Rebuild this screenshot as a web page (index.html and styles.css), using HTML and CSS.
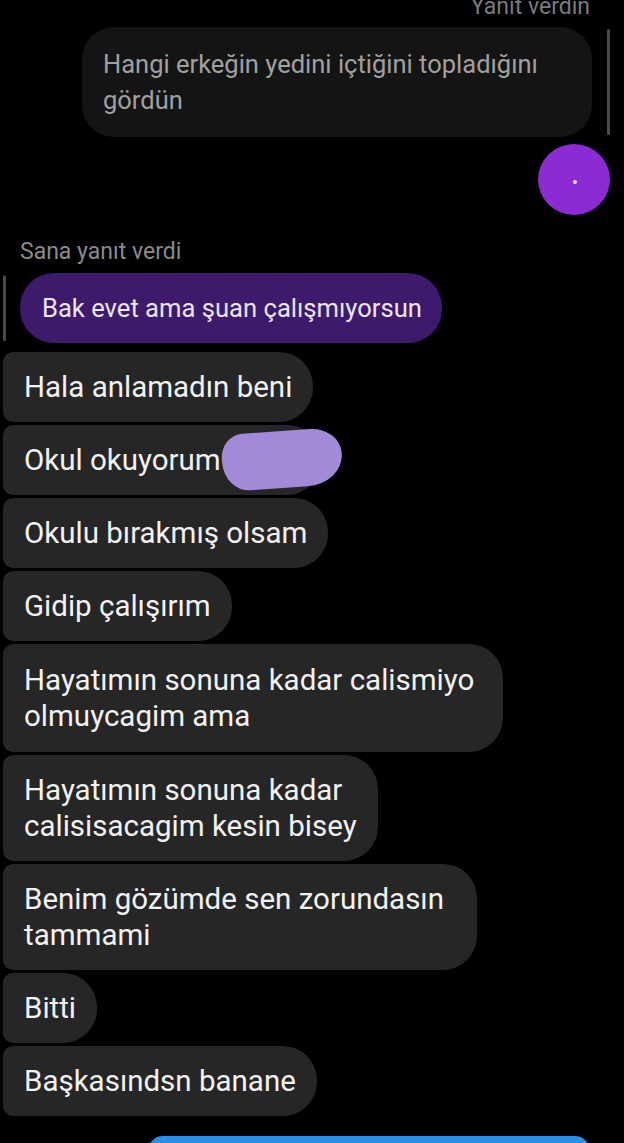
FILE: index.html
```html
<!DOCTYPE html>
<html lang="tr">
<head>
  <meta charset="UTF-8" />
  <meta name="viewport" content="width=device-width, initial-scale=1.0"/>
  <title>Mesajlar</title>
  <link rel="stylesheet" href="styles.css">
</head>
<body>
  <div class="chat">
    <div class="reply-label mine">Yanıt verdin</div>
    <div class="quote-row mine">
      <div class="quote-bubble">Hangi erkeğin yedini içtiğini topladığını gördün</div>
      <div class="quote-bar"></div>
    </div>
    <div class="sent-row">
      <div class="dot-bubble"><span class="dot"></span></div>
    </div>

    <div class="reply-label theirs">Sana yanıt verdi</div>
    <div class="quote-row theirs">
      <div class="quote-bar"></div>
      <div class="purple-bubble">Bak evet ama şuan çalışmıyorsun</div>
    </div>

    <div class="msgs">
      <div class="msg">Hala anlamadın beni</div>
      <div class="msg hidden-part">Okul okuyorum<span class="scribble"></span></div>
      <div class="msg">Okulu bırakmış olsam</div>
      <div class="msg">Gidip çalışırım</div>
      <div class="msg wide">Hayatımın sonuna kadar calismiyo<br>olmuycagim ama</div>
      <div class="msg">Hayatımın sonuna kadar<br>calisisacagim kesin bisey</div>
      <div class="msg wider">Benim gözümde sen zorundasın<br>tammami</div>
      <div class="msg">Bitti</div>
      <div class="msg">Başkasındsn banane</div>
    </div>

    <div class="input-peek"></div>
  </div>
</body>
</html>
```

FILE: styles.css
```css
html, body {
  margin: 0;
  background: #000;
}
body {
  font-family: Roboto, "Noto Sans", sans-serif;
  color: #eee;
  overflow: hidden;
  height: 1143px;
}
.chat {
  margin-top: -8px;
}
.reply-label {
  font-size: 23px;
  line-height: 30px;
  color: #8a8a8a;
}
.reply-label.mine {
  text-align: right;
  padding-right: 34px;
  color: #7a7a7a;
}
.reply-label.theirs {
  margin-top: 22px;
  padding-left: 20px;
}
.quote-row {
  display: flex;
  align-items: stretch;
}
.quote-row.mine {
  justify-content: flex-end;
  margin-top: 5px;
  padding-right: 14px;
  gap: 15px;
}
.quote-row.theirs {
  margin-top: 6px;
  padding-left: 3px;
  gap: 14px;
}
.quote-bar {
  width: 3px;
  background: #4a4a4a;
  border-radius: 2px;
  margin: 2px 0;
}
.quote-bubble {
  width: 468px;
  background: #141414;
  color: #a0a0a0;
  font-size: 25.5px;
  line-height: 36px;
  padding: 19px 21px;
  border-radius: 32px;
}
.sent-row {
  display: flex;
  justify-content: flex-end;
  padding-right: 14px;
  margin-top: 7px;
}
.dot-bubble {
  width: 72px;
  height: 71px;
  border-radius: 50%;
  background: #8c2bd3;
  display: flex;
  align-items: center;
  justify-content: center;
}
.dot {
  width: 4px;
  height: 4px;
  border-radius: 50%;
  background: #f3dcff;
  margin-left: 1px;
  margin-top: 5px;
}
.purple-bubble {
  background: #3d1a6c;
  color: #ece6f6;
  font-size: 25.6px;
  line-height: 36px;
  padding: 17px 20px 17px 22px;
  border-radius: 34px;
}
.msgs {
  display: flex;
  flex-direction: column;
  align-items: flex-start;
  gap: 3px;
  margin-top: 9px;
  padding-left: 3px;
}
.msg {
  position: relative;
  background: #262626;
  color: #f2f2f2;
  font-size: 29.5px;
  line-height: 36px;
  padding: 17px 21px;
  border-radius: 10px 34px 34px 10px;
  white-space: nowrap;
}
.msg.wide {
  padding-right: 29px;
  padding-top: 18px;
  padding-bottom: 18px;
}
.msg.wider {
  padding-right: 33px;
}
.msg.hidden-part {
  padding-right: 100px;
}
.scribble {
  position: absolute;
  left: 219px;
  top: 6px;
  width: 120px;
  height: 57px;
  background: #a38ad9;
  border-radius: 22px 30px 36px 26px / 24px 26px 30px 30px;
  transform: rotate(-4deg);
}
.input-peek {
  margin: 20px 34px 0 148px;
  height: 30px;
  background: #2b8ee8;
  border-radius: 20px;
}
```
